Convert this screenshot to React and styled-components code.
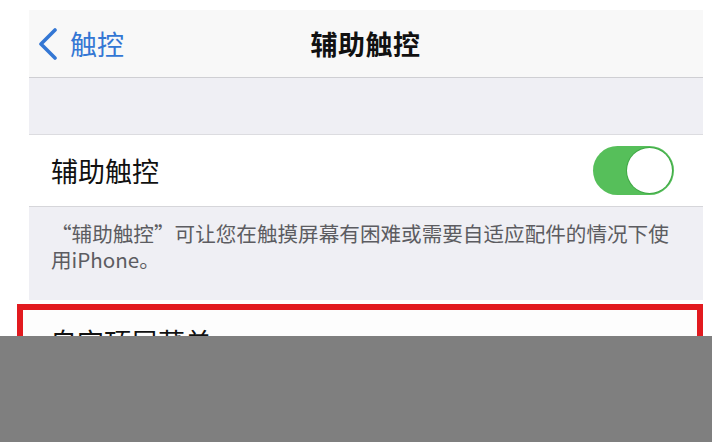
import React from 'react'
import styled, { createGlobalStyle } from 'styled-components'

const GlobalStyle = createGlobalStyle`
  html, body {
    margin: 0;
    padding: 0;
    background: #ffffff;
    font-family: "Noto Sans CJK SC", "Noto Sans", sans-serif;
  }
`

const Screen = styled.div`
  width: 712px;
  height: 442px;
  display: flex;
  flex-direction: column;
  overflow: hidden;
`

const Viewport = styled.div`
  height: 336px;
  flex: none;
  overflow: hidden;
  padding-top: 10px;
  box-sizing: border-box;
`

const Panel = styled.div`
  margin: 0 9px 0 29px;
  background: #efeff4;
`

const NavBar = styled.div`
  height: 67px;
  display: grid;
  grid-template-columns: 1fr auto 1fr;
  align-items: center;
  padding: 0 10px 0 9px;
  background: #f8f8f8;
  border-bottom: 1px solid #cfcfd3;
`

const BackButton = styled.div`
  display: flex;
  align-items: center;
  gap: 12px;
  color: #3477d4;
  font-size: 27px;
  line-height: 1;
  svg {
    display: block;
  }
`

const NavTitle = styled.div`
  font-size: 27px;
  font-weight: 600;
  color: #111;
  letter-spacing: 0.5px;
`

const Band = styled.div`
  height: 56px;
  border-bottom: 1px solid #dcdce0;
`

const Row = styled.div`
  height: 71px;
  display: flex;
  align-items: center;
  justify-content: space-between;
  padding: 0 29px 0 22px;
  background: #fff;
  border-bottom: 1px solid #d6d6da;
`

const RowLabel = styled.div`
  font-size: 27px;
  color: #111;
`

const Toggle = styled.div`
  width: 81px;
  height: 49px;
  border-radius: 25px;
  background: #56bf5a;
  display: flex;
  align-items: center;
  justify-content: ${p => (p.$on ? 'flex-end' : 'flex-start')};
  padding: 2px;
  box-sizing: border-box;
`

const Knob = styled.div`
  width: 45px;
  height: 45px;
  border-radius: 50%;
  background: #fff;
  box-shadow: 0 0 0 1px #3fa845;
`

const Footer = styled.div`
  height: 93px;
  box-sizing: border-box;
  padding: 13px 27px 0 22px;
  font-size: 20.6px;
  line-height: 26px;
  color: #5c5c61;
`

const Highlight = styled.div`
  margin: 4px 9px 0 17px;
  border: 6px solid #e21a1f;
  background: #fdfdfd;
  height: 80px;
  padding: 13px 0 0 27px;
`

const HighlightLabel = styled.div`
  font-size: 27px;
  line-height: 38px;
  color: #111;
`

const Cover = styled.div`
  flex: 1;
  background: #7f7f7f;
`

function Chevron() {
  return (
    <svg width="20" height="32" viewBox="0 0 20 32">
      <path d="M17 2 L3 16 L17 30" fill="none" stroke="#3477d4" strokeWidth="3.6" strokeLinecap="round" strokeLinejoin="round" />
    </svg>
  )
}

export default function App() {
  return (
    <>
      <GlobalStyle />
      <Screen>
        <Viewport>
          <Panel>
            <NavBar>
              <BackButton>
                <Chevron />
                <span>触控</span>
              </BackButton>
              <NavTitle>辅助触控</NavTitle>
              <div />
            </NavBar>
            <Band />
            <Row>
              <RowLabel>辅助触控</RowLabel>
              <Toggle $on>
                <Knob />
              </Toggle>
            </Row>
            <Footer>“辅助触控”可让您在触摸屏幕有困难或需要自适应配件的情况下使用iPhone。</Footer>
          </Panel>
          <Highlight>
            <HighlightLabel>自定顶层菜单</HighlightLabel>
          </Highlight>
        </Viewport>
        <Cover />
      </Screen>
    </>
  )
}
